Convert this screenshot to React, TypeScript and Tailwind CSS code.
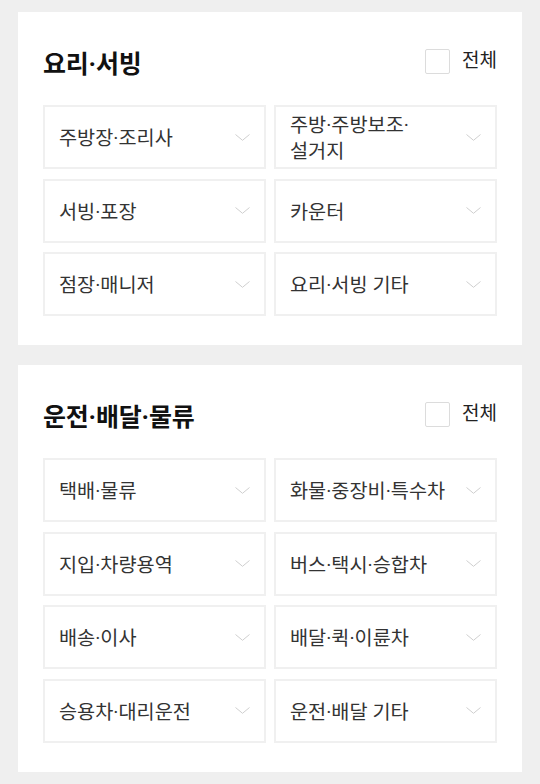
type Section = { title: string; items: string[] }

const sections: Section[] = [
  {
    title: '요리·서빙',
    items: ['주방장·조리사', '주방·주방보조·\n설거지', '서빙·포장', '카운터', '점장·매니저', '요리·서빙 기타'],
  },
  {
    title: '운전·배달·물류',
    items: [
      '택배·물류',
      '화물·중장비·특수차',
      '지입·차량용역',
      '버스·택시·승합차',
      '배송·이사',
      '배달·퀵·이륜차',
      '승용차·대리운전',
      '운전·배달 기타',
    ],
  },
]

function Chevron() {
  return (
    <svg width="15" height="7" viewBox="0 0 15 7" fill="none" className="shrink-0">
      <polyline points="0.5,0.5 7.5,6.3 14.5,0.5" stroke="#cfcfcf" strokeWidth="1" />
    </svg>
  )
}

function CategoryCard({ section }: { section: Section }) {
  return (
    <div className="bg-white px-[25px] pt-[36px] pb-[29px]">
      <div className="flex items-center justify-between h-[30px] mb-[27px]">
        <h2 className="text-[25px] font-bold text-[#111] tracking-[-0.2px] mt-[4px]">{section.title}</h2>
        <label className="flex items-center gap-3">
          <span className="w-[25px] h-[25px] border-[1.5px] border-[#dcdcdc] rounded-[2px] bg-white -mt-[3px]" />
          <span className="text-[19px] text-[#222] -mt-[4px]">전체</span>
        </label>
      </div>

      {/* sub categories */}
      <div className="grid grid-cols-2 gap-x-2 gap-y-[9.5px]">
        {section.items.map((item) => (
          <div
            key={item}
            className="h-[64px] border-2 border-[#f0f0f0] flex items-center justify-between pl-[14px] pr-[14px]"
          >
            <span className="text-[19.7px] leading-[26px] text-[#333] whitespace-pre-line mt-[4px]">{item}</span>
            <Chevron />
          </div>
        ))}
      </div>
    </div>
  )
}

export default function App() {
  return (
    <div
      className="min-h-[784px] bg-[#efefef] px-[18px] pt-[12px] flex flex-col gap-5"
      style={{ fontFamily: 'Roboto, "Noto Sans CJK KR", sans-serif' }}
    >
      {sections.map((s) => (
        <CategoryCard key={s.title} section={s} />
      ))}
    </div>
  )
}
